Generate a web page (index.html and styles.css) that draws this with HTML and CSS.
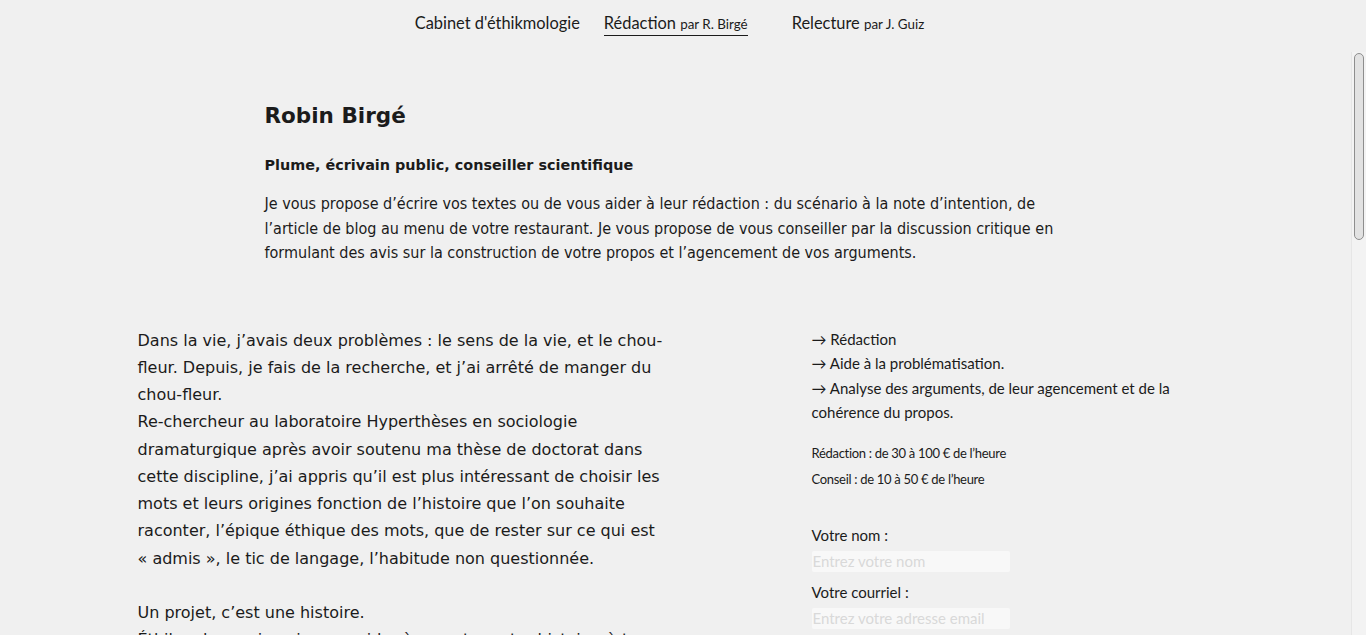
FILE: index.html
```html
<!DOCTYPE html>
<html lang="fr">
<head>
    <meta charset="UTF-8">
    <meta name="viewport" content="width=device-width, initial-scale=1.0">
    <title>Rédaction par R. Birgé</title>
    <link rel="stylesheet" href="styles.css">
</head>
<body>

    <!-- Top navigation -->
    <nav class="topnav">
        <a href="#">Cabinet d'éthikmologie</a>
        <a href="#" class="active">Rédaction <small>par R. Birgé</small></a>
        <a href="#">Relecture <small>par J. Guiz</small></a>
    </nav>

    <main class="page">
        <!-- Presentation -->
        <header class="intro">
            <h1>Robin Birgé</h1>
            <h2>Plume, écrivain public, conseiller scientifique</h2>
            <p>Je vous propose d’écrire vos textes ou de vous aider à leur rédaction : du scénario à la note d’intention, de l’article de blog au menu de votre restaurant. Je vous propose de vous conseiller par la discussion critique en formulant des avis sur la construction de votre propos et l’agencement de vos arguments.</p>
        </header>

        <section class="columns">
            <div class="story">
                <p>Dans la vie, j’avais deux problèmes : le sens de la vie, et le chou-fleur. Depuis, je fais de la recherche, et j’ai arrêté de manger du chou-fleur.<br>
                Re-chercheur au laboratoire Hyperthèses en sociologie dramaturgique après avoir soutenu ma thèse de doctorat dans cette discipline, j’ai appris qu’il est plus intéressant de choisir les mots et leurs origines fonction de l’histoire que l’on souhaite raconter, l’épique éthique des mots, que de rester sur ce qui est «&nbsp;admis&nbsp;», le tic de langage, l’habitude non questionnée.</p>

                <p>Un projet, c’est une histoire.<br>
                Éthikmologue, je vais vous aider à raconter votre histoire, à trouver les mots justes et à leur donner du sens. Chaque texte a sa voix, chaque voix a son rythme : nous le chercherons ensemble.</p>

                <p>Qu’il s’agisse d’un dossier de financement, d’un mémoire, d’une biographie ou d’une simple lettre, je prends le temps de comprendre ce que vous voulez dire avant de l’écrire avec vous.</p>
            </div>

            <aside class="offer">
                <ul class="services">
                    <li>→ Rédaction</li>
                    <li>→ Aide à la problématisation.</li>
                    <li>→ Analyse des arguments, de leur agencement et de la cohérence du propos.</li>
                </ul>

                <ul class="prices">
                    <li>Rédaction : de 30 à 100 € de l’heure</li>
                    <li>Conseil : de 10 à 50 € de l’heure</li>
                </ul>

                <form class="contact" onsubmit="return false">
                    <label for="nom">Votre nom :</label>
                    <input type="text" id="nom" placeholder="Entrez votre nom">
                    <label for="courriel">Votre courriel :</label>
                    <input type="email" id="courriel" placeholder="Entrez votre adresse email">
                    <label for="message">Votre message :</label>
                    <textarea id="message" rows="6" placeholder="Votre message"></textarea>
                    <button type="submit">Envoyer</button>
                </form>
            </aside>
        </section>
    </main>

    <!-- Scroll rail of the page area -->
    <div class="scroll-rail"><div class="scroll-thumb"></div></div>

</body>
</html>
```

FILE: styles.css
```css
html, body {
    margin: 0;
    height: 100%;
}

body {
    background: #f0f0f0;
    color: #1b1b1b;
    font-family: "DejaVu Sans", sans-serif;
    display: flex;
    flex-direction: column;
    overflow: hidden;
}

/* Top navigation */
.topnav {
    height: 52px;
    flex: none;
    display: flex;
    justify-content: center;
    align-items: flex-start;
    gap: 24px;
    padding: 13px 27px 0 0;
    box-sizing: border-box;
    font-family: "Lato", sans-serif;
    font-size: 16.4px;
}

.topnav a {
    color: #1b1b1b;
    text-decoration: none;
    padding-bottom: 1px;
    line-height: 19px;
}

.topnav a:last-child {
    margin-left: 20px;
}

.topnav small {
    font-size: 13.4px;
}

.topnav .active {
    border-bottom: 1px solid #1b1b1b;
}

/* Scrolling page */
.page {
    flex: 1;
    overflow-y: auto;
    padding-right: 15px;
}

.page::-webkit-scrollbar {
    display: none;
}

.scroll-rail {
    position: fixed;
    top: 52px;
    right: 0;
    bottom: 0;
    width: 15px;
    background: #f3f3f3;
    border-left: 1px solid #e6e6e6;
    box-sizing: border-box;
}

.scroll-thumb {
    margin: 1px 2px 0 2px;
    height: 185px;
    border: 1px solid #8e8e8e;
    border-radius: 5px;
    background: #e2e2e2;
}

.intro {
    width: 822px;
    margin: 0 auto;
    padding-top: 49px;
}

.intro h1 {
    font-size: 21.5px;
    margin: 0 0 23px;
    line-height: 30px;
}

.intro h2 {
    font-size: 14.4px;
    margin: 0 0 16px;
    line-height: 22px;
}

.intro p {
    font-family: "DejaVu Sans Condensed", "DejaVu Sans", sans-serif;
    font-size: 16px;
    line-height: 24.5px;
    margin: 0;
}

.columns {
    width: 1076px;
    min-height: 1562px;
    margin: 61px auto 0;
    display: grid;
    grid-template-columns: 545px 402px;
    justify-content: space-between;
    align-items: start;
}

.story p {
    font-size: 16px;
    line-height: 27.25px;
    margin: 0 0 27px;
}

.offer {
    font-family: "Lato", sans-serif;
    font-size: 15px;
}

.offer ul {
    list-style-type: none;
    padding: 0;
    margin: 0;
}

.services li {
    line-height: 24.5px;
}

.offer .prices {
    margin-top: 15px;
    font-size: 13px;
}

.prices li {
    line-height: 26px;
    letter-spacing: -0.3px;
}

.contact {
    margin-top: 33px;
    display: flex;
    flex-direction: column;
    align-items: flex-start;
}

.contact label {
    line-height: 20px;
    margin-bottom: 6px;
}

.contact input, .contact textarea {
    width: 198px;
    height: 21px;
    box-sizing: border-box;
    border: none;
    border-radius: 2px;
    background: #f8f8f8;
    font-family: "Lato", sans-serif;
    font-size: 15px;
    padding: 0 1px;
    margin: 0 0 10px;
}

.contact textarea {
    height: 120px;
}

.contact ::placeholder {
    color: #d9d9d9;
}

.contact button {
    margin-top: 10px;
    padding: 6px 14px;
    font-family: "Lato", sans-serif;
    border: 1px solid #ccc;
    background: #f8f8f8;
}
```
